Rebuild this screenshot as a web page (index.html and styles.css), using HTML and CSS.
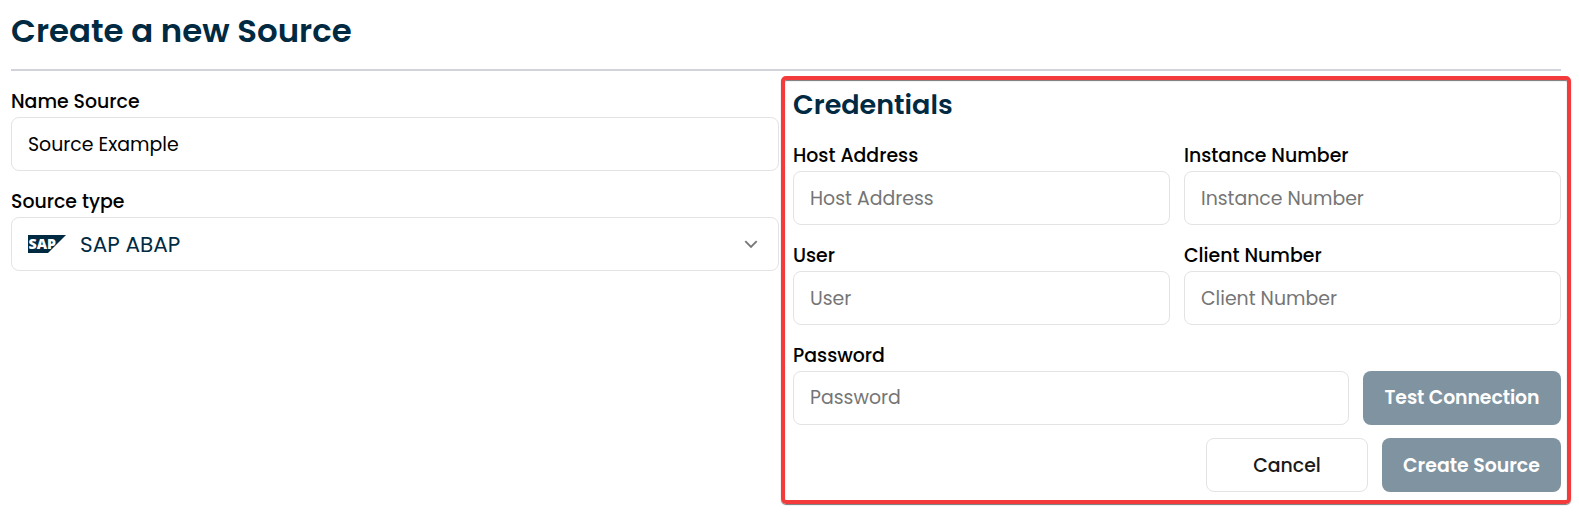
FILE: index.html
```html
<!DOCTYPE html>
<html lang="en">
<head>
<meta charset="utf-8">
<title>Create a new Source</title>
<link rel="stylesheet" href="styles.css">
</head>
<body>
<main class="page">
  <h1 class="title">Create a new Source</h1>
  <div class="columns">
    <section class="column">
      <div class="field">
        <div class="label">Name Source</div>
        <div class="box">Source Example</div>
      </div>
      <div class="field">
        <div class="label">Source type</div>
        <div class="box select">
          <svg class="sap" viewBox="0 0 38 18" width="38" height="18"><path d="M0 0H38L20 18H0Z" fill="#002a42"/><text x="0.6" y="14.2" textLength="27.4" lengthAdjust="spacingAndGlyphs" class="sap-text">SAP</text></svg>
          <span class="select-value">SAP ABAP</span>
          <svg class="chevron" viewBox="0 0 14 9" width="14" height="9"><path d="M1.3 1.2L7 6.9L12.7 1.2" fill="none" stroke="#777" stroke-width="1.9"/></svg>
        </div>
      </div>
    </section>
    <section class="column credentials">
      <h2 class="subtitle">Credentials</h2>
      <div class="pair">
        <div class="field">
          <div class="label">Host Address</div>
          <div class="box hint">Host Address</div>
        </div>
        <div class="field">
          <div class="label">Instance Number</div>
          <div class="box hint">Instance Number</div>
        </div>
      </div>
      <div class="pair">
        <div class="field">
          <div class="label">User</div>
          <div class="box hint">User</div>
        </div>
        <div class="field">
          <div class="label">Client Number</div>
          <div class="box hint">Client Number</div>
        </div>
      </div>
      <div class="password-row">
        <div class="field">
          <div class="label">Password</div>
          <div class="box hint raised">Password</div>
        </div>
        <button class="button primary test">Test Connection</button>
      </div>
      <div class="actions">
        <button class="button cancel">Cancel</button>
        <button class="button primary create">Create Source</button>
      </div>
    </section>
  </div>
  <div class="highlight"></div>
</main>
</body>
</html>
```
FILE: styles.css
```css
* { box-sizing: border-box; }
body { margin: 0; background: #fff; color: #000; font-family: Poppins, Inter, sans-serif; font-size: 18.9px; }
h1, h2 { margin: 0; font-weight: 600; color: #002a42; white-space: nowrap; }
.page { position: relative; width: 1579px; height: 512px; padding: 0 18px 0 11px; overflow: hidden; }
.title { height: 71px; border-bottom: 2px solid #d0d3da; font-size: 32.4px; line-height: 61px; }
.columns { display: grid; grid-template-columns: 768px 768px; gap: 14px; }
.column { display: flex; flex-direction: column; gap: 14px; padding-top: 14px; }
.credentials { padding-top: 15px; gap: 0; }
.label { height: 32px; line-height: 34px; font-weight: 500; white-space: nowrap; }
.box { height: 54px; display: flex; align-items: center; padding: 0 16px; border: 1px solid #e3e3e3; border-radius: 8px; white-space: nowrap; }
.select { color: #002a42; font-size: 21.6px; padding: 0 20px 0 16px; }
.select-value { margin-left: 14px; }
.sap { overflow: visible; }
.chevron { margin-left: auto; }
.sap-text { font: 800 14.5px "Open Sans", sans-serif; fill: #fff; }
.hint { color: #757575; }
.raised { padding-bottom: 2px; }
.subtitle { height: 53px; font-size: 27px; line-height: 38px; }
.pair { display: grid; grid-template-columns: 377px 377px; gap: 14px; margin-bottom: 14px; }
.password-row { display: grid; grid-template-columns: 556px 198px; gap: 14px; align-items: end; }
.actions { display: flex; justify-content: flex-end; gap: 14px; margin-top: 13px; }
.button { height: 54px; padding: 0; border: 0; border-radius: 8px; font: 500 18.9px Poppins, Inter, sans-serif; white-space: nowrap; }
.primary { background: #8093a1; color: #fff; font-weight: 600; }
.test { padding-bottom: 2px; letter-spacing: -0.1px; }
.create { width: 179px; }
.cancel { width: 162px; border: 1px solid #e3e3e3; background: #fff; color: #1a1a1a; }
.highlight { position: absolute; left: 781px; top: 76px; width: 790px; height: 428px; border: 4px solid #f43b3b; border-radius: 5px; box-shadow: 0 1px 1px #777, inset 0 1px 1px #777; pointer-events: none; }
```
